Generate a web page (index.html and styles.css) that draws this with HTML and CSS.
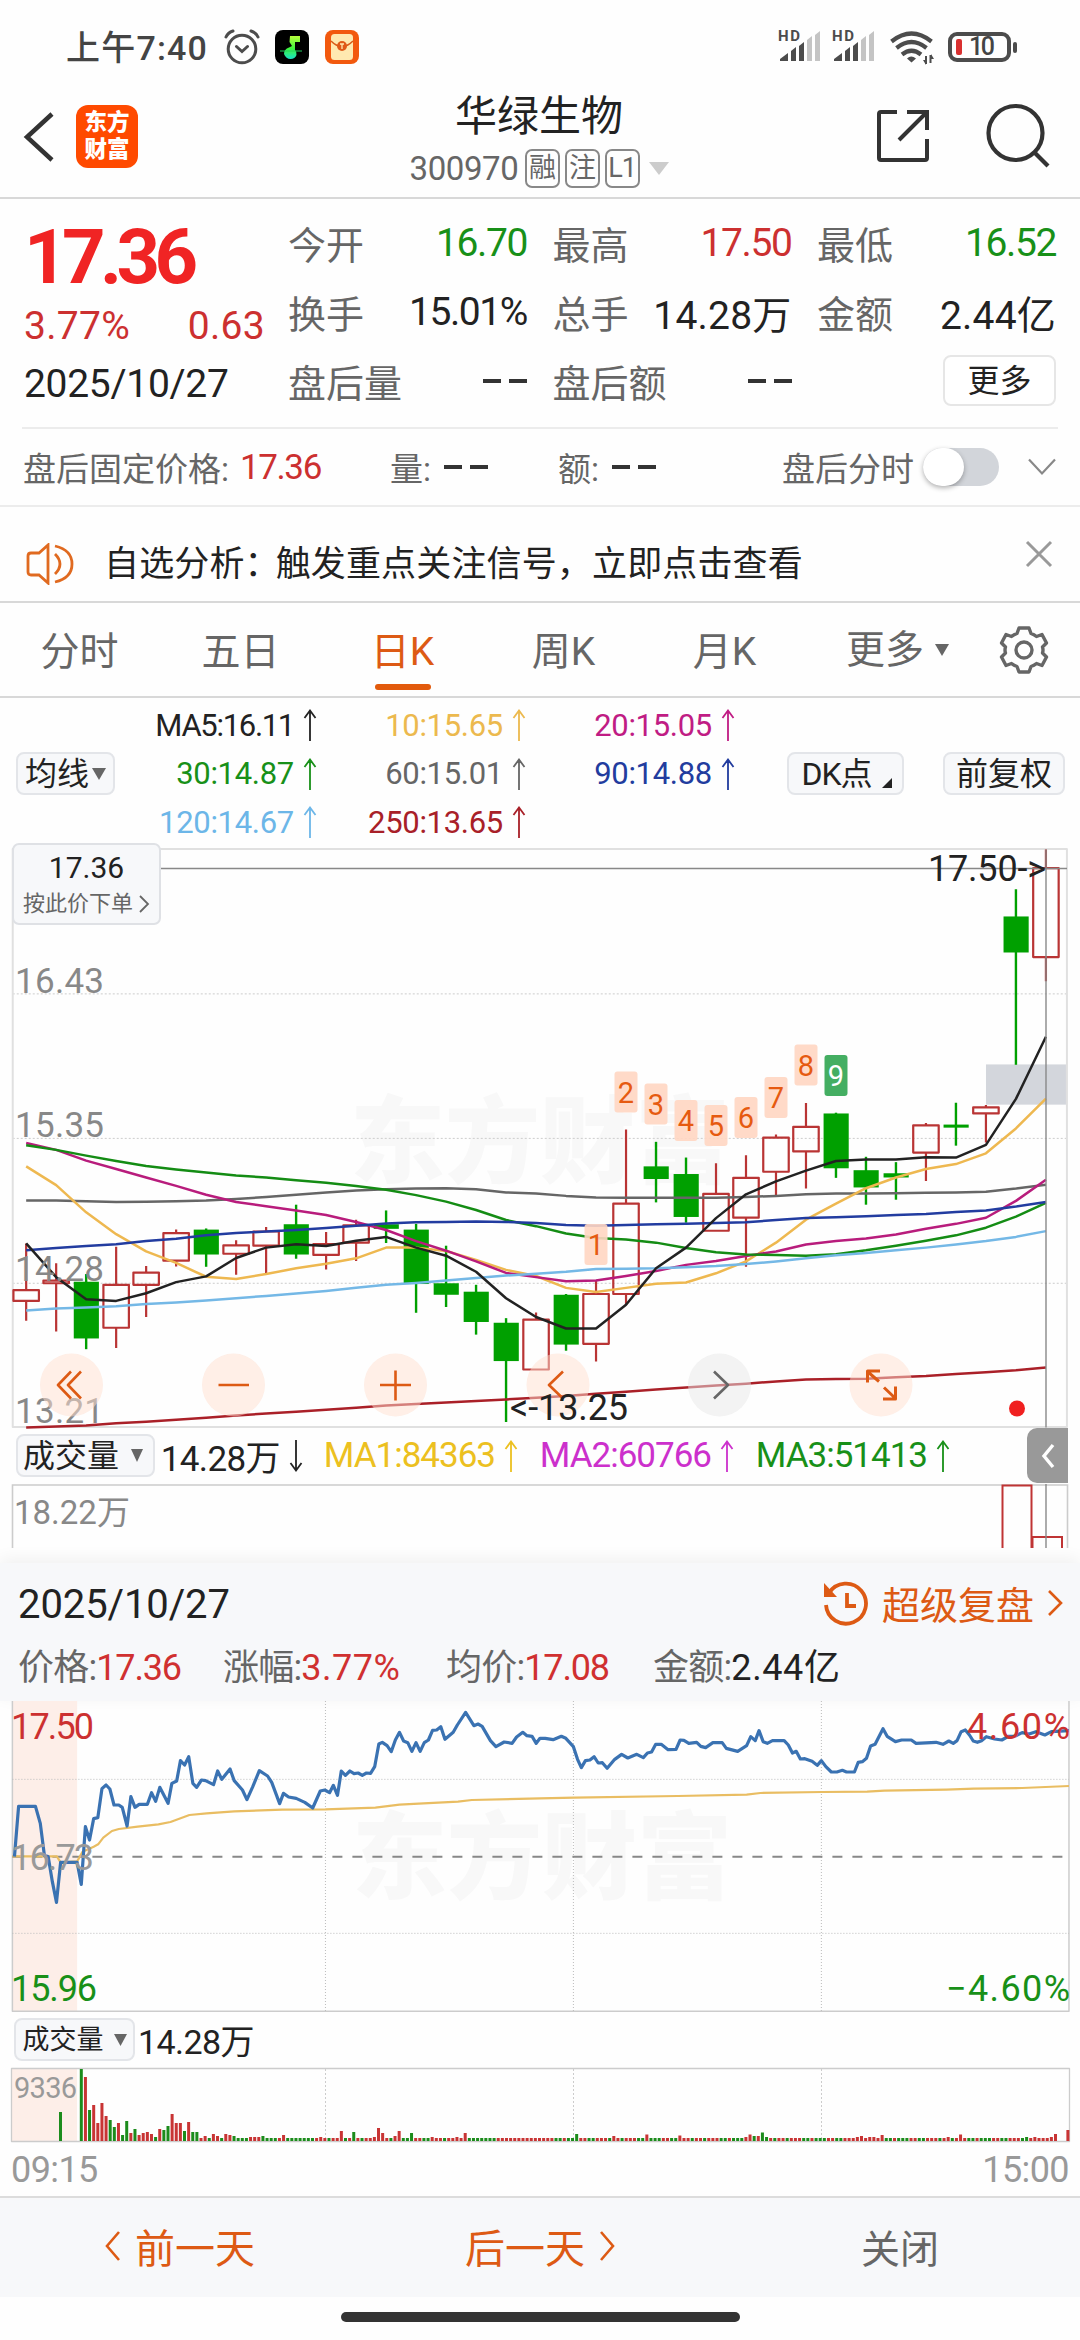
FILE: index.html
```html
<!DOCTYPE html>
<html lang="zh-CN">
<head>
<meta charset="utf-8">
<title>华绿生物 300970</title>
<link rel="stylesheet" href="styles.css">
</head>
<body>
<div class="status">
  <span class="clock">上午7:40</span>
  <svg class="st-left" width="132" height="44" viewBox="0 0 132 44">
    <g fill="none" stroke="#4c4c4c" stroke-width="3" stroke-linecap="round">
      <circle cx="18" cy="25" r="13.8"/><path d="M12.500 22.500l5.500 5 5.500-5M2 13q2-4.500 7-6M34 13q-2-4.500-7-6"/>
    </g>
    <rect x="51" y="6" width="34" height="34" rx="8" fill="#000"/>
    <defs><linearGradient id="note" x1="0" y1="0" x2="0" y2="1"><stop offset="0" stop-color="#b8ff3c"/><stop offset=".55" stop-color="#3df53d"/><stop offset="1" stop-color="#18e0c8"/></linearGradient></defs>
    <path d="M66 12h10v6h-5v8q2 2 1.500 5-1.500 4-6 4t-6.500-5q0-5 5-6.500l3-1.500-2.500-4z" fill="url(#note)"/>
    <path d="M56 27h22" stroke="#20d060"/>
    <rect x="101" y="6" width="34" height="34" rx="8" fill="#f2590e"/>
    <rect x="107" y="10" width="22" height="26" rx="3.500" fill="#ffe9b0"/>
    <path d="M107 17q5 5 11 6 6-1 11-6" fill="none" stroke="#d85a18" stroke-width="1.500"/>
    <circle cx="118" cy="22" r="5" fill="#e05a18"/><path d="M116 20h4M118 20v5" stroke="#ffe9b0" stroke-width="1.300"/>
  </svg>
  <svg class="st-right" width="250" height="40" viewBox="0 0 250 40">
    <g id="signal">
      <text x="1" y="13" class="hd" textLength="22">HD</text>
      <path d="M3 33v-2l8-6v8zM14 33V23l5-4v14zM22 33V18l5-4v19z" fill="#4c4c4c"/>
      <path d="M30 33V12l5-4v25zM38 33V7l5-4v30z" fill="#c4c4c4"/>
    </g>
    <use href="#signal" x="54"/>
    <g fill="none" stroke="#4c4c4c" stroke-width="4.200">
      <path d="M114.500 13.500q20-16 40 0M119.500 20q15-12 30 0M125 26.500q9.500-7.500 19 0"/>
    </g>
    <path d="M130 30.500q4-4 9 0l-4.500 4z" fill="#4c4c4c"/>
    <path d="M149 28v8M153.500 27v8" stroke="#4c4c4c" stroke-width="2"/><path d="M146 32h3v5zM157 31h-3v-5z" fill="#4c4c4c"/>
    <rect x="173" y="6" width="59" height="26" rx="7" fill="none" stroke="#4c4c4c" stroke-width="4"/>
    <rect x="179" y="11" width="6" height="16" rx="2" fill="#d93030"/>
    <text x="192" y="27" class="batt">10</text>
    <rect x="236" y="14" width="4" height="11" rx="2" fill="#4c4c4c"/>
  </svg>
</div>

<header class="head">
  <svg class="back" width="32" height="50" viewBox="0 0 32 50"><path d="M29 2L4 25l25 23" fill="none" stroke="#333" stroke-width="4.500"/></svg>
  <div class="logo"><span>东方</span><span>财富</span></div>
  <div class="title">
    <h1>华绿生物</h1>
    <div class="code"><b>300970</b><i>融</i><i>注</i><i>L1</i><svg width="20" height="13"><path d="M0 0h20L10 13z" fill="#ccc"/></svg></div>
  </div>
  <svg class="share" width="54" height="54" viewBox="0 0 54 54" fill="none" stroke="#333" stroke-width="4"><path d="M21 3H5q-2 0-2 2v44q0 2 2 2h44q2 0 2-2V30M31 3h20v18M50 4L23 31"/></svg>
  <svg class="search" width="64" height="66" viewBox="0 0 64 66" fill="none" stroke="#333" stroke-width="4.200"><circle cx="29.500" cy="30" r="27"/><path d="M48 49l14 14"/></svg>
</header>

<section class="quote">
  <div class="main">
    <div class="price">17.36</div>
    <div class="chg"><span>3.77%</span><span>0.63</span></div>
    <div class="date">2025/10/27</div>
  </div>
  <dl class="q">
    <div><dt>今开</dt><dd class="green">16.70</dd></div><div><dt>最高</dt><dd class="red">17.50</dd></div><div><dt>最低</dt><dd class="green">16.52</dd></div>
    <div><dt>换手</dt><dd>15.01%</dd></div><div><dt>总手</dt><dd class="wide">14.28万</dd></div><div><dt>金额</dt><dd class="wide">2.44亿</dd></div>
    <div><dt>盘后量</dt><dd class="dash"><u></u><u></u></dd></div><div><dt>盘后额</dt><dd class="dash"><u></u><u></u></dd></div><div class="end"><button class="more">更多</button></div>
  </dl>
</section>

<section class="after">
  <span class="a1">盘后固定价格:</span><span class="a2 red">17.36</span>
  <span class="a3">量:</span><span class="dash a4"><u></u><u></u></span>
  <span class="a5">额:</span><span class="dash a6"><u></u><u></u></span>
  <span class="a7">盘后分时</span><span class="toggle"></span>
  <svg width="28" height="18" viewBox="0 0 28 18"><path d="M1 1.500l13 14 13-14" fill="none" stroke="#888" stroke-width="2.200"/></svg>
</section>

<section class="notice">
  <svg width="48" height="42" viewBox="0 0 48 42" fill="none" stroke="#e06a20" stroke-width="2.800"><path d="M22 2v38l-9-8H5q-3 0-3-3V13q0-3 3-3h8zM29 11q10 10 0 20M29 3q17 4 17 18T29 39"/></svg>
  <p>自选分析<em>：</em>触发重点关注信号，立即点击查看</p>
  <svg class="x" width="28" height="28" viewBox="0 0 28 28"><path d="M2 2l24 24M26 2L2 26" stroke="#999" stroke-width="3"/></svg>
</section>

<nav class="tabs">
  <a>分时</a><a>五日</a><a class="on">日K</a><a>周K</a><a>月K</a><a class="mr">更多<svg width="14" height="12"><path d="M0 0h14L7 12z" fill="#666"/></svg></a>
  <svg class="gear" width="50" height="50" viewBox="-25 -25 50 50" fill="none" stroke="#666" stroke-width="3.400" stroke-linejoin="round"><path d="M-5-22H5L7-16.500Q10-15.500 12.500-13.500L18-15.500L22.500-7L18.500-3Q19.500 0 18.500 3L22.500 7L18 15.500L12.500 13.500Q10 15.500 7 16.500L5 22H-5L-7 16.500Q-10 15.500-12.500 13.500L-18 15.500L-22.500 7L-18.500 3Q-19.500 0-18.500-3L-22.500-7L-18-15.500L-12.500-13.500Q-10-15.500-7-16.500Z"/><circle r="8"/></svg>
</nav>

<section class="ma">
  <button class="pill avg">均线<svg width="14" height="12"><path d="M0 0h14L7 12z" fill="#666"/></svg></button>
  <div class="legend">
    <span class="k">MA5:16.11<svg class="up"><use href="#up"/></svg></span><span class="y">10:15.65<svg class="up"><use href="#up"/></svg></span><span class="m">20:15.05<svg class="up"><use href="#up"/></svg></span>
    <span class="g">30:14.87<svg class="up"><use href="#up"/></svg></span><span class="s">60:15.01<svg class="up"><use href="#up"/></svg></span><span class="b">90:14.88<svg class="up"><use href="#up"/></svg></span>
    <span class="l">120:14.67<svg class="up"><use href="#up"/></svg></span><span class="r">250:13.65<svg class="up"><use href="#up"/></svg></span>
  </div>
  <button class="pill dk">DK点<svg width="10" height="10"><path d="M10 0v10H0z" fill="#222"/></svg></button>
  <button class="pill fq">前复权</button>
</section>
<svg width="0" height="0" class="defs"><symbol id="up" viewBox="0 0 14 32"><path d="M7 32V2M1.500 9L7 1.500 12.500 9" fill="none" stroke="currentColor" stroke-width="1.800"/></symbol></svg>

<section class="kchart">
  <svg class="layer" id="kline" viewBox="0 23 3136 1508" preserveAspectRatio="none"></svg>
  <svg class="layer" id="kmarks" viewBox="0 849 1080 577"></svg>
  <div class="order"><b>17.36</b><span>按此价下单<svg width="12" height="18"><path d="M2 1l8 8-8 8" fill="none" stroke="#666" stroke-width="1.800"/></svg></span></div>
</section>

<section class="volhead">
  <button class="pill">成交量<svg width="14" height="13"><path d="M1 0h12L7 13z" fill="#666"/></svg></button>
  <span class="v0">14.28万<svg class="up down"><use href="#up"/></svg></span>
  <span class="v1">MA1:84363<svg class="up"><use href="#up"/></svg></span>
  <span class="v2">MA2:60766<svg class="up"><use href="#up"/></svg></span>
  <span class="v3">MA3:51413<svg class="up"><use href="#up"/></svg></span>
  <div class="drawer"><svg width="16" height="26"><path d="M13 2L4 13l9 11" fill="none" stroke="#fff" stroke-width="3.400"/></svg></div>
</section>
<section class="volchart">
  <svg width="1080" height="64" viewBox="0 1484 1080 64">
    <path d="M12.500 1548V1485H1067.500V1548" fill="none" stroke="#ccc" stroke-width="1.600"/>
    <text x="14" y="1524" class="lab">18.22万</text>
    <g fill="none" stroke="#bf3434" stroke-width="2"><path d="M1002.500 1548V1485.500H1031.500V1548M1032.500 1548V1537H1062V1548"/></g>
    <path d="M1046 1484V1548" stroke="#888" stroke-width="1.400"/>
  </svg>
</section>

<section class="panel">
  <div class="ptop"><span class="pdate">2025/10/27</span>
    <svg class="rewind" width="48" height="46" viewBox="0 0 48 46" fill="none" stroke="#dd5a14" stroke-width="3.800"><path d="M7 12a20 20 0 1 1-3 12"/><path d="M25 12v13h9"/><path d="M2 2v14h13z" fill="#dd5a14" stroke="none"/></svg>
    <span class="replay">超级复盘</span>
    <svg width="18" height="28" viewBox="0 0 18 28"><path d="M3 2l12 12L3 26" fill="none" stroke="#dd5a14" stroke-width="2.600"/></svg>
  </div>
  <div class="pnums"><span>价格:<b>17.36</b></span><span>涨幅:<b class="pct">3.77%</b></span><span>均价:<b>17.08</b></span><span>金额:<b class="blk">2.44亿</b></span></div>
</section>

<section class="tchart">
  <svg class="layer" id="tline" viewBox="0 33 3136 933" preserveAspectRatio="none"></svg>
  <svg class="layer" viewBox="0 1701 1080 311">
    <text x="11" y="1739" class="n red" textLength="83">17.50</text><text x="11" y="1870" class="n gray" textLength="83">16.73</text><text x="11" y="2001" class="n green" textLength="86">15.96</text>
    <text x="967" y="1739" class="n red" textLength="103">4.60%</text><text x="946" y="2001" class="n green" textLength="124">−4.60%</text>
  </svg>
</section>
<section class="tvhead"><button class="pill">成交量<svg width="13" height="12"><path d="M0 0h13L6.500 12z" fill="#666"/></svg></button><span>14.28万</span></section>
<section class="tvol"><svg id="tvol" width="1080" height="76" viewBox="0 2067 1080 76"></svg></section>
<div class="times"><span>09:15</span><span>15:00</span></div>

<footer class="foot">
  <a><svg width="16" height="30" viewBox="0 0 16 30"><path d="M14 1L2 15l12 14" fill="none" stroke="#dd5a14" stroke-width="2.600"/></svg>前一天</a>
  <a>后一天<svg width="16" height="30" viewBox="0 0 16 30"><path d="M2 1l12 14L2 29" fill="none" stroke="#dd5a14" stroke-width="2.600"/></svg></a>
  <a class="close">关闭</a>
</footer>
<div class="home"><i></i></div>
<script src="charts.js"></script>
</body>
</html>
```
FILE: styles.css
```css
* { box-sizing: border-box; }
body { margin: 0; width: 1080px; height: 2340px; overflow: hidden; background: #fefefe; color: #222; font-family: Roboto, "Noto Sans CJK SC", sans-serif; white-space: nowrap; }
svg { display: block; flex: none; }
button { font: inherit; color: inherit; padding: 0; margin: 0; }
.red { color: #cc3030; fill: #cc3030; }
.green { color: #189018; fill: #189018; }
.gray { fill: #999; }
.defs { position: absolute; }

.status { height: 87px; display: flex; align-items: flex-start; padding: 24px 53px 0 66px; color: #444; }
.clock { font-size: 34px; line-height: 48px; font-weight: 500; width: 158px; letter-spacing: 1.2px; }
.st-left { overflow: visible; }
.st-right { margin-left: auto; margin-top: 4px; }
.hd { font-size: 15px; font-weight: 700; fill: #4c4c4c; }
.batt { font-size: 25px; font-weight: 500; fill: #444; letter-spacing: -2.5px; }

.head { height: 112px; border-bottom: 2px solid #d8d8d8; display: flex; align-items: flex-start; padding-left: 23px; }
.back { margin-top: 25px; }
.logo { margin: 18px 0 0 21px; width: 62px; height: 63px; border-radius: 12px; background: #ff4a00; color: #fff; font-weight: 900; font-size: 22.5px; line-height: 27px; padding-top: 4px; text-align: center; }
.logo span { display: block; }
.title { width: 528px; margin-left: 137px; display: flex; flex-direction: column; align-items: center; }
.title h1 { margin: 7px 0 0; font-size: 42px; line-height: 46px; font-weight: 400; }
.code { display: flex; align-items: center; height: 40px; margin-top: 8px; color: #666; }
.code b { font-weight: 400; font-size: 33px; letter-spacing: -.4px; width: 115px; }
.code i { font-style: normal; width: 35px; height: 39px; border: 2px solid #888; border-radius: 7px; font-size: 27px; line-height: 35px; text-align: center; margin-right: 5px; letter-spacing: -1px; }
.code svg { margin-left: 4px; }
.share { margin: 22px 0 0 73px; }
.search { margin: 16px 0 0 56px; }

.quote { height: 230px; margin: 0 22px; border-bottom: 2px solid #ececec; display: flex; }
.main { width: 266px; padding-left: 2px; }
.price { font-size: 76px; line-height: 76px; margin-top: 20px; font-weight: 700; color: #f02424; letter-spacing: -5.600px; }
.chg { display: flex; justify-content: space-between; width: 241px; font-size: 39px; line-height: 46px; margin-top: 8px; color: #cc3030; letter-spacing: .3px; }
.date { font-size: 39px; line-height: 46px; margin-top: 12px; letter-spacing: -.3px; }
.q { margin: 9px 0 0; width: 769px; display: grid; grid-template-columns: 239px 239px 239px; column-gap: 25.5px; grid-auto-rows: 69px; }
.q > div { display: flex; justify-content: space-between; align-items: center; }
.q .end { justify-content: flex-end; }
dt { font-size: 38px; color: #666; }
dd { margin: 0; font-size: 39px; letter-spacing: -1.400px; }
dd.wide { letter-spacing: .2px; }
.dash { display: flex; gap: 8px; }
.dash u { width: 18px; height: 4px; background: #333; }
.more { width: 113px; height: 51px; background: #fff; border: 2px solid #e6e6e6; border-radius: 8px; font-size: 32px; line-height: 44px; }

.after { height: 78px; border-bottom: 2px solid #ececec; display: flex; align-items: center; padding-left: 23px; font-size: 33px; color: #666; }
.a1 { width: 217px; } .a2 { width: 150px; font-size: 35px; letter-spacing: -1.400px; } .a3, .a5 { width: 54px; } .a4 { width: 114px; } .a6 { width: 170px; }
.a7 { width: 141px; }
.toggle { width: 76px; height: 38px; margin-right: 29px; border-radius: 19px; background: #d2d5da; position: relative; }
.toggle::after { content: ""; position: absolute; left: 0; top: 0; width: 41px; height: 38px; border-radius: 20px; background: #fff; box-shadow: 0 2px 5px rgba(0,0,0,.3); }

.notice { height: 96px; border-bottom: 2px solid #d8d8d8; display: flex; align-items: center; padding: 20px 27px 0 26px; }
.notice p { margin: 2px 0 0 30px; font-size: 35px; line-height: 50px; letter-spacing: .15px; }
.notice em { font-style: normal; letter-spacing: -4px; }
.notice .x { margin: -20px 0 0 auto; }

.tabs { height: 95px; border-bottom: 2px solid #d8d8d8; display: flex; align-items: center; font-size: 39px; color: #666; }
.tabs a { width: 161px; text-align: center; height: 93px; line-height: 98px; }
.tabs a:first-child, .tabs a:nth-child(2) { padding-right: 2px; }
.tabs .on { color: #dd5a14; display: flex; flex-direction: column; align-items: center; }
.tabs .on::after { content: ""; width: 56px; height: 6px; border-radius: 3px; background: #e25a0c; margin-top: -17px; }
.tabs .mr { width: 185px; display: flex; justify-content: center; align-items: center; gap: 11px; }
.gear { margin-left: 9px; }

.ma { height: 151px; display: flex; align-items: center; padding-left: 16px; }
.pill { background: #f7f8fa; border: 2px solid #e3e5e9; border-radius: 8px; height: 43px; font-size: 32px; line-height: 36px; display: flex; align-items: center; justify-content: center; }
.avg { width: 99px; gap: 3px; }
.legend { width: 672px; display: grid; grid-template-columns: 202px 209px 209px; grid-auto-rows: 48.5px; font-size: 31px; letter-spacing: -.3px; }
.legend .k { letter-spacing: -1.300px; }
.legend span, .volhead span { display: flex; align-items: center; justify-content: flex-end; }
.up { width: 14px; height: 32px; margin-left: 9px; }
.k { color: #222; } .y { color: #ecb94e; } .m { color: #c01c84; } .g { color: #189018; } .s { color: #666; } .b { color: #223c9e; } .l { color: #6cb6e8; } .r { color: #a82028; }
.dk { width: 117px; gap: 10px; padding-left: 2px; letter-spacing: -1px; }
.dk svg { align-self: flex-end; margin-bottom: 5px; }
.fq { width: 122px; margin-left: 39px; }

.kchart { height: 578px; position: relative; }
.layer { position: absolute; left: 0; top: 0; width: 100%; height: 100%; overflow: visible; }
.kchart svg path, .tchart svg path { vector-effect: non-scaling-stroke; }
.order { position: absolute; left: 12px; top: -6px; width: 149px; height: 82px; background: #f7f8fa; border: 2px solid #dfe1e5; border-radius: 7px; text-align: center; }
.order b { display: block; font-weight: 400; font-size: 30px; line-height: 46px; }
.order span { display: flex; justify-content: center; align-items: center; gap: 5px; font-size: 22px; line-height: 26px; color: #666; }
.lab { font-size: 35px; fill: #888; }
.volchart .lab { font-size: 33px; }
.val { font-size: 36px; fill: #222; }
.wm { font-size: 95px; font-weight: 900; fill: #f8f8f8; }

.volhead { height: 57px; display: flex; align-items: center; padding-left: 16px; font-size: 35px; letter-spacing: -1px; }
.volhead .pill { width: 139px; gap: 11px; letter-spacing: 0; padding-right: 4px; }
.v0 { width: 148px; letter-spacing: -.6px; } .v1 { width: 215px; color: #ecc020; } .v2 { width: 216px; color: #cc30cc; } .v3 { width: 216px; color: #189018; }
.down { transform: rotate(180deg); }
.drawer { margin-left: auto; margin-right: 12px; width: 41px; height: 55px; background: #999; border-radius: 10px 0 0 10px; display: flex; align-items: center; justify-content: center; }
.volchart { height: 64px; }

.panel { height: 138px; margin-top: 15px; background: #f7f8fa; box-shadow: 0 -4px 16px rgba(0,0,0,.06); padding: 0 16px 0 18px; }
.ptop { display: flex; align-items: center; height: 80px; }
.pdate { font-size: 40px; letter-spacing: -.1px; margin: 2px auto 0 0; }
.rewind { margin-top: 2px; }
.replay { font-size: 38px; color: #dd5a14; margin: -2px 12px 0 12px; }
.pnums { display: flex; font-size: 36px; color: #666; line-height: 50px; letter-spacing: -.8px; }
.pnums span { width: 211px; } .pnums span:first-child { width: 205px; } .pnums span:nth-child(2) { width: 223px; } .pnums span:nth-child(3) { width: 207px; }
.pnums b { font-weight: 400; color: #d03030; letter-spacing: -1.200px; } .pnums .blk { color: #222; letter-spacing: .6px; } .pnums .pct { letter-spacing: .5px; }

.tchart { height: 311px; position: relative; }
.n { font-size: 36px; }
.tvhead { height: 55px; display: flex; align-items: center; padding: 0 0 0 14px; font-size: 34px; letter-spacing: -.6px; }
.tvhead .pill { width: 121px; font-size: 27px; gap: 10px; margin-right: 3px; letter-spacing: 0; }
.tvol { height: 76px; }
.times { height: 53px; display: flex; justify-content: space-between; padding: 6px 11px 0; font-size: 36px; color: #999; letter-spacing: -.6px; }
.foot { height: 101px; border-top: 2px solid #dcdcdc; background: #f7f8fa; display: grid; grid-template-columns: repeat(3, 360px); font-size: 40px; color: #dd5a14; padding-bottom: 4px; }
.foot a { display: flex; align-items: center; justify-content: center; gap: 14px; }
.foot .close { color: #666; font-size: 39px; }
.home { height: 43px; background: #fefefe; display: flex; justify-content: center; align-items: center; }
.home i { width: 399px; height: 10px; border-radius: 5px; background: #333; margin-top: -4px; }
```
FILE: charts.js
```js
const NS = 'http://www.w3.org/2000/svg';
const add = (svg, tag, attrs, text) => {
  const el = document.createElementNS(NS, tag);
  for (const k in attrs) el.setAttribute(k, attrs[k]);
  if (text) el.textContent = text;
  svg.appendChild(el);
};
const line = (svg, d, stroke, width, extra) =>
  add(svg, 'path', Object.assign({ d, fill: 'none', stroke, 'stroke-width': width, 'stroke-linejoin': 'round' }, extra));

/* Daily candles: direction, high, body top, body bottom, low */
const candles = [
  ['r',1052,1174,1202,1254],['r',1104,1149,1156,1282],['g',1132,1152,1300,1328],['r',1061,1160,1272,1325],
  ['r',1111,1128,1160,1244],['r',1016,1025,1097,1112],['g',1013,1016,1081,1113],['r',1044,1057,1079,1134],
  ['r',1009,1021,1058,1131],['g',951,1002,1081,1092],['r',1022,1054,1082,1120],['r',990,1005,1050,1098],
  ['g',966,1002,1014,1051],['g',1001,1016,1158,1233],['g',1058,1156,1186,1218],['g',1160,1178,1257,1290],
  ['g',1247,1259,1359,1518],['r',1232,1251,1381,1381],['g',1184,1186,1316,1332],['r',1150,1184,1314,1360],
  ['r',755,948,1184,1212],['g',787,851,884,945],['g',828,871,983,998],['r',843,923,1019,1019],
  ['r',822,881,985,1113],['r',768,776,865,927],['r',686,748,812,909],['g',711,713,856,881],
  ['g',826,861,906,951],['g',840,869,880,938],['r',738,744,815,889],['g',685,742,750,797],
  ['r',691,697,713,789],['g',128,199,293,586],['r',24,73,305,368]];
const averages = {
  '#666': [940,940,942,944,943,942,940,936,931,925,919,914,911,909,908,911,919,922,928,932,933,933,933,933,931,928,924,922,922,921,920,919,917,909,899],
  '#eeb850': [851,900,971,1028,1073,1103,1139,1145,1132,1117,1105,1091,1063,1063,1072,1095,1121,1137,1168,1179,1168,1157,1154,1130,1099,1050,990,948,908,880,858,845,817,752,674],
  '#b81c7c': [790,808,836,858,880,902,925,944,955,966,978,996,1017,1046,1071,1099,1129,1140,1151,1149,1137,1124,1108,1098,1085,1073,1055,1046,1039,1029,1014,1001,985,941,886],
  '#148c14': [796,808,823,837,850,859,867,875,880,887,894,902,912,926,943,965,991,1007,1026,1038,1042,1050,1064,1075,1081,1082,1084,1080,1070,1058,1045,1031,1011,982,946],
  '#223ca0': [1070,1064,1059,1054,1046,1040,1031,1025,1021,1017,1012,1006,1000,997,996,995,996,999,1004,1006,1004,1002,1001,999,997,991,986,984,981,978,975,970,966,956,944],
  '#74b8e6': [1227,1222,1219,1216,1210,1206,1201,1195,1189,1183,1176,1168,1160,1155,1149,1142,1136,1131,1126,1119,1118,1117,1114,1111,1106,1099,1091,1083,1077,1070,1063,1055,1046,1035,1020],
  '#aa2028': [1532,1530,1527,1521,1517,1512,1507,1501,1496,1491,1486,1481,1475,1471,1467,1463,1459,1455,1450,1444,1439,1433,1428,1423,1418,1412,1407,1406,1405,1401,1398,1393,1388,1383,1376],
  '#222': [1052,1140,1198,1202,1182,1153,1138,1090,1063,1054,1059,1045,1035,1063,1084,1126,1195,1244,1274,1274,1212,1117,1063,986,924,890,862,837,833,833,827,828,795,675,513]
};
const k = document.getElementById('kline');
const kx = i => 76 + i * 87.09;
add(k, 'text', { class: 'wm', transform: 'translate(1016 876) scale(2.904 2.613)' }, '东方财富');
add(k, 'rect', { x: 2863, y: 585, width: 235, height: 105, fill: '#d3d6dc' });
[401, 778, 1156].forEach(y => line(k, `M37 ${y}H3098`, '#ccc', 1, { 'stroke-dasharray': '2 2' }));
line(k, 'M37 23H3098V1531H37Z', '#e0e0e0', 2);
candles.forEach(([c, h, t, b, l], i) => {
  const x = kx(i);
  if (c === 'g') {
    line(k, `M${x} ${h}V${l}`, '#00a000', 2.4);
    add(k, 'rect', { x: x - 36, y: t, width: 73, height: b - t, fill: '#00a000' });
  } else line(k, `M${x} ${h}V${t}M${x} ${b}V${l}M${x - 37} ${t}H${x + 37}V${b}H${x - 37}Z`, '#b93434', 2.2);
});
for (const c in averages) line(k, 'M' + averages[c].map((y, i) => kx(i) + ' ' + y).join('L'), c, 2.5);

/* Labels and round controls over the candles */
const m = document.getElementById('kmarks');
[[992.5,'16.43'],[1136.5,'15.35'],[1280.5,'14.28'],[1422.5,'13.21']].forEach(([y, t]) => add(m, 'text', { x: 15, y, class: 'lab', textLength: 89 }, t));
line(m, 'M160 868H1067', '#888', 1.4);
line(m, 'M1046 849V1427', '#888', 1.4);
[1223.5,1071,1083,1099.5,1104.5,1096.5,1076.5,1044,1054.5].forEach((y, i) => {
  const x = 596 + i * 30, last = i === 8;
  add(m, 'rect', { x: x - 11.5, y, width: 23, height: 41, rx: 3, fill: last ? '#44ae62' : '#ffd6c2', 'fill-opacity': last ? 1 : .9 });
  add(m, 'text', { x, y: y + 31, 'text-anchor': 'middle', 'font-size': 29, fill: last ? '#fff' : '#e65a10' }, String(i + 1));
});
[71.5,233.5,395.5,558,719.5,881].forEach((cx, i) => add(m, 'circle', { cx, cy: 1384.5, r: 31.5, fill: i === 4 ? '#e8e8e8' : '#ffe0d0', 'fill-opacity': .5 }));
line(m, 'M71 1371L58 1384.500L71 1398M81 1371L68 1384.500L81 1398M218.500 1384.500H249M380 1384.500H411M395.500 1370V1400M563 1371L549 1384.500L563 1398', '#dd5a14', 2.6);
line(m, 'M879 1381L868 1371.500M867.500 1382V1370.500H880M884 1387L895 1397.500M895.500 1386V1398.500H883', '#dd5a14', 3);
line(m, 'M714 1371L728 1384.500L714 1398', '#666', 2.6);
add(m, 'text', { x: 510, y: 1419, class: 'val', textLength: 118 }, '<-13.25');
add(m, 'text', { x: 928, y: 880, class: 'val', textLength: 118 }, '17.50->');
add(m, 'circle', { cx: 1017, cy: 1408, r: 8, fill: '#f02020' });

/* Minute chart */
const t = document.getElementById('tline');
add(t, 'rect', { x: 36, y: 33, width: 188, height: 931, fill: '#fdeee8' });
line(t, 'M36 33V964H3104V33', '#ccc', 1.5);
add(t, 'text', { class: 'wm', transform: 'translate(1022 605) scale(2.904 3)' }, '东方财富');
[268, 730].forEach(y => line(t, `M36 ${y}H3104`, '#bbb', 1, { 'stroke-dasharray': '1 2' }));
[945, 1665, 2385].forEach(x => line(t, `M${x} 33V964`, '#bbb', 1, { 'stroke-dasharray': '1 2' }));
line(t, 'M36 500H3104', '#888', 2, { 'stroke-dasharray': '10 10' });
line(t, 'M36 499L165 499 176 517 224 514 240 485 272 470 285 463 300 443 325 423 345 417 400 410 460 403 495 396 550 375 600 370 680 364 820 359 945 358 1090 353 1160 344 1230 340 1330 335 1370 330 1568 325 1668 323 1968 318 2168 314 2208 309 2388 306 2518 305 2568 302 2748 299 2828 296 2968 294 3104 288', '#e9bd62', 2.2);
const morning = '42,500 54,349 103,349 117,400 129,497 140,500 152,575 164,637 176,517 224,517 236,583 248,410 260,450 272,386 284,383 296,296 308,285 319,297 331,345 345,345 355,352 369,408 380,320 392,352 404,343 428,343 440,308 452,334 464,292 488,340 499,280 513,273 524,212 536,225 548,200 560,280 571,292 585,270 597,272 620,284 632,243 644,268 668,237 680,272 704,300 717,329 734,290 753,242 777,258 789,277 812,341 823,310 838,321 860,325 885,337 908,354 930,303 943,300 957,308 968,286 980,316 991,243 1003,256 1016,243 1028,251 1040,249 1052,256 1064,249 1076,250 1088,230 1100,162 1110,157 1124,167 1136,185 1148,150 1160,127 1172,153 1184,158 1196,184 1208,158 1220,184 1232,158 1244,150 1256,121 1268,120 1280,110 1292,148 1316,127 1328,105 1352,67 1376,107 1388,102 1400,109 1424,152 1440,170 1464,156 1487,160 1500,141 1518,127 1530,137 1545,139 1557,160 1568,145';
const rest = '15,145 38,149 62,139 75,145 97,170 109,208 120,233 132,212 145,210 157,200 169,219 181,218 195,235 217,208 237,193 255,204 281,193 300,203 312,189 324,186 336,163 352,163 372,179 395,178 407,150 418,151 432,160 455,157 467,169 481,173 502,158 529,158 541,175 574,184 600,167 612,140 625,152 636,122 648,155 660,160 675,152 709,152 721,165 733,189 744,184 756,207 769,206 790,214 805,226 817,212 830,230 846,246 862,246 878,241 890,246 913,246 924,217 936,215 948,205 960,168 973,163 996,116 1008,139 1032,155 1050,150 1078,150 1092,160 1150,157 1170,163 1187,153 1200,160 1211,152 1223,125 1235,120 1247,135 1258,153 1270,157 1282,152 1296,140 1320,147 1341,150 1360,139 1380,138 1400,128 1420,132 1440,125 1466,135 1485,125 1536,122';
const pts = morning.split(' ').concat(rest.split(' ').map(p => { const [x, y] = p.split(','); return (+x + 1568) + ',' + y; }));
line(t, 'M' + pts.join('L'), '#3a72b2', 3.2);

/* Minute volume */
const v = document.getElementById('tvol');
add(v, 'rect', { x: 12, y: 2069, width: 65, height: 72, fill: '#fdeee8' });
line(v, 'M11.500 2068.500H1069.500V2141.500H11.500Z', '#ccc', 1.3);
[325.5, 573.5, 821.5].forEach(x => line(v, `M${x} 2069V2141`, '#ccc', 1, { 'stroke-dasharray': '2 2' }));
add(v, 'text', { x: 14, y: 2098, 'font-size': 29, fill: '#999', textLength: 63 }, '9336');
const first = 'g72 r64 g31 r36 r18 r38 r25 g21 g14 r18 g6 g20 r8 g12 r6 r8 r9 r7 g4 r12 g11 g15 r27 r18 r18 g10 r19 g9 g9 r3 r5 g3 r7 r5 g3 r7 r6 g5 g3 g3 g3 r4 r4 r4 g5 g3 g3 g3 r3 r6 g3 g3 g3 g3 g3 g3 g3 r3 r4 r3 g3'.split(' ');
const peaks = { 63:'r10', 66:'g9', 71:'r4', 72:'r13', 73:'r8', 76:'r5', 77:'r10', 80:'g8', 85:'r4', 91:'r4', 93:'r8', 120:'g7', 129:'r5', 137:'r6.5', 145:'r5.5', 161:'r4', 162:'r6.500', 163:'g5', 164:'r5', 165:'g8.500', 166:'g4', 188:'r4', 189:'r5', 191:'r4', 192:'r4', 194:'r6', 210:'r4', 213:'r6.500', 229:'g4', 231:'r4', 235:'r4', 236:'r7', 237:'r0', 238:'r0', 239:'r11' };
const mix = 'grrggrrrgrrgrrrggrgg';
for (let i = 0; i < 240; i++) {
  const s = first[i] || peaks[i] || (i > 93 && i < 101 ? 'g3' : i > 100 && i < 113 ? 'r3' : mix[i % 20] + '3');
  const h = +s.slice(1);
  add(v, 'rect', { x: 79.8 + i * 4.128, y: 2141 - h, width: 3, height: h, fill: s[0] === 'g' ? '#1c8c1c' : '#c83434' });
}
add(v, 'rect', { x: 59, y: 2112, width: 3, height: 29, fill: '#1c8c1c' });
```
